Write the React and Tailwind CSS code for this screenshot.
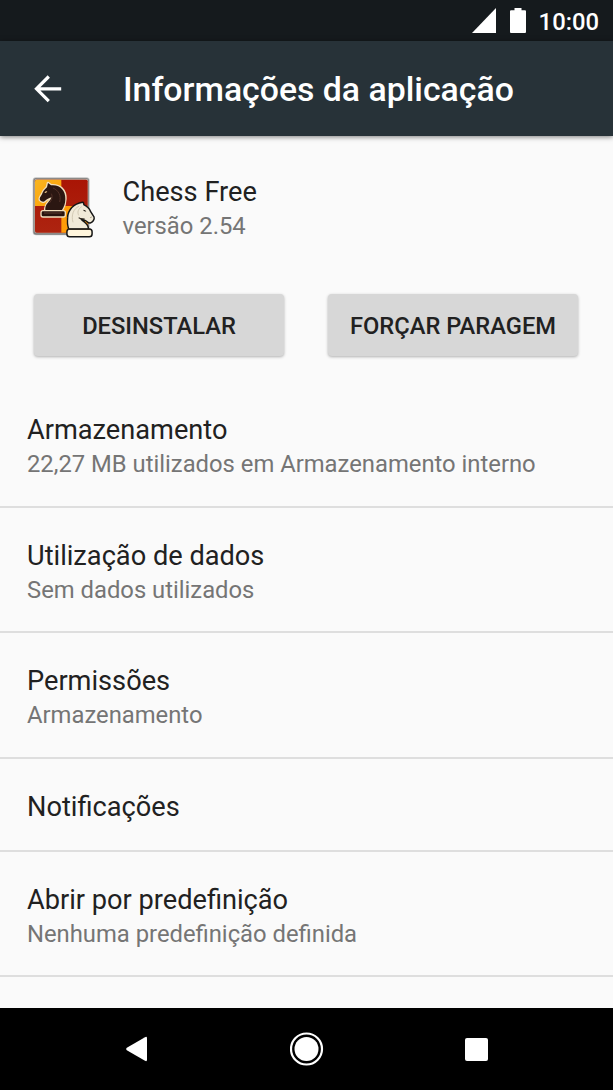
import clsx from "clsx";

const OPCOES = [
  { titulo: "Armazenamento", resumo: "22,27 MB utilizados em Armazenamento interno" },
  { titulo: "Utilização de dados", resumo: "Sem dados utilizados" },
  { titulo: "Permissões", resumo: "Armazenamento" },
  { titulo: "Notificações" },
  { titulo: "Abrir por predefinição", resumo: "Nenhuma predefinição definida" },
];

function StatusBar() {
  return (
    <div className="flex h-[41px] shrink-0 items-center justify-end bg-[#151a1d] pr-[14px] text-white">
      <svg width="24" height="25" viewBox="0 0 24 25" fill="currentColor">
        <path d="M24 0v25H0z" />
      </svg>
      <svg className="ml-[14px]" width="16" height="25" viewBox="0 0 16 25" fill="currentColor">
        <path d="M4.500 0h7v2.200h3.500q1 0 1 1V24q0 1-1 1H1q-1 0-1-1V3.200q0-1 1-1h3.500z" />
      </svg>
      <span className="ml-[13px] pt-[4px] text-[23.8px] leading-none font-medium">10:00</span>
    </div>
  );
}

function AppBar() {
  return (
    <header className="z-10 flex h-[95px] shrink-0 items-center bg-[#273238] pl-[34px] text-white shadow-[0_1px_5px_rgba(0,0,0,0.5)]">
      <button aria-label="Voltar">
        <svg width="28" height="28" viewBox="0 0 28 28" fill="none" stroke="currentColor" strokeWidth="3.2">
          <path d="M14.800 1.500 2.500 13.800 14.800 26.100M2.500 13.800H27.200" />
        </svg>
      </button>
      <h1 className="ml-[61px] pt-[3px] text-[33.8px] leading-none font-medium">Informações da aplicação</h1>
    </header>
  );
}

function ChessIcon() {
  return (
    <svg width="66" height="64" viewBox="36 33 198 192">
      <defs>
        <linearGradient id="red" x1="0" y1="0" x2="0" y2="1">
          <stop offset="0" stopColor="#a91505" />
          <stop offset="1" stopColor="#ad2410" />
        </linearGradient>
        <linearGradient id="gold" x1="0" y1="0" x2="1" y2="1">
          <stop offset="0" stopColor="#f8b522" />
          <stop offset="1" stopColor="#ff9d00" />
        </linearGradient>
      </defs>
      <rect x="38" y="37" width="171" height="174" rx="10" fill="#000" opacity="0.22" />
      <rect x="40" y="39" width="167" height="170" rx="9" fill="#000" opacity="0.35" />
      <rect x="43" y="41" width="162" height="164" rx="7" fill="#b9aaa0" />
      <rect x="45" y="44" width="158" height="159" rx="5" fill="url(#red)" />
      <path d="M50 44h74v79H45V49q0-5 5-5z" fill="url(#gold)" />
      <path d="M124 123h79v80h-79z" fill="#ff9c08" />

      <g stroke="#f1dfbd" strokeWidth="8" strokeLinejoin="round" paintOrder="stroke">
        <path
          fill="#2b1712"
          d="M84 54l9 7c27-3 44 15 43 41 0 14-4 23-10 33H76c-1-13 6-20 14-29l5-9c-7 2-13 4-18 9-4 6-12 5-17-1-3-5 2-10 6-17 3-9 7-14 15-21z"
        />
        <rect x="65" y="139" width="69" height="15" rx="4" fill="#29140f" />
      </g>
      <path d="M73 83l5-5 4 2-5 4z" fill="#e8c48a" />
      <path d="M99 69c17 7 25 23 20 42M94 86c5 10 1 20-6 28" fill="none" stroke="#59362c" strokeWidth="2.500" />
      <path d="M72 144h53" stroke="#76513f" strokeWidth="2" />

      <g stroke="#161616" strokeWidth="9" strokeLinejoin="round" paintOrder="stroke">
        <path
          fill="#f1ead8"
          d="M188 114l2 7c9 4 17 11 20 20l10 16c2 6-4 13-10 15-6 0-8-6-14-8-6-1-12-1-16-4 3 11 23 15 23 31h-55c-4-12-4-22-3-33 1-22 17-40 43-44z"
        />
        <rect x="143" y="194" width="71" height="19" rx="6" fill="#fff5dc" />
      </g>
      <path d="M177 124c-17 7-24 27-18 48M185 125c-12 8-13 17-9 26" fill="none" stroke="#d3cab4" strokeWidth="3" />
      <path d="M176 158c4 4 11 3 18 4" fill="none" stroke="#302920" strokeWidth="3.500" />
      <path d="M190 134q7 0 9 6l-8-2z" fill="#29231b" />
      <path d="M211 158l4-2" stroke="#5b5142" strokeWidth="2" />
      <path d="M144 193h67" stroke="#302920" strokeWidth="4" />
    </svg>
  );
}

function AcaoButton({ children }) {
  return (
    <button className="h-[62px] rounded-[4px] bg-[#d7d7d7] pt-[3px] text-[23.7px] font-medium text-[#212121] shadow-[0_1px_3px_rgba(0,0,0,0.3)]">
      {children}
    </button>
  );
}

function OpcaoItem({ titulo, resumo }) {
  return (
    <li
      className={clsx(
        "flex flex-col justify-center border-b-2 border-[#dedede] pt-[5px] pl-[27px]",
        resumo ? "h-[125.5px]" : "h-[93px]"
      )}
    >
      <span className="text-[27.2px] leading-[36px] text-[#212121]">{titulo}</span>
      {resumo && <span className="text-[23.8px] leading-[33px] text-[#757575]">{resumo}</span>}
    </li>
  );
}

function NavBar() {
  return (
    <nav className="flex h-[82px] shrink-0 items-center justify-between bg-black pr-[125px] pl-[125px] text-white">
      <svg width="23" height="26" viewBox="0 0 23 26" fill="currentColor">
        <path d="M20 1.200 1.800 11.800q-1.500 1.200 0 2.400L20 24.800q2 1 2-1V2.200q0-2-2-1z" />
      </svg>
      <svg width="34" height="34" viewBox="0 0 34 34">
        <circle cx="16.500" cy="17" r="15.500" fill="none" stroke="currentColor" strokeWidth="2.200" />
        <circle cx="16.500" cy="17" r="12" fill="currentColor" />
      </svg>
      <div className="h-[23px] w-[23px] rounded-[2px] bg-white" />
    </nav>
  );
}

export default function App() {
  return (
    <div className="flex h-[1090px] w-[613px] flex-col overflow-hidden bg-[#fafafa] font-[Roboto,sans-serif]">
      <StatusBar />
      <AppBar />
      <main className="min-h-0 flex-1 overflow-hidden">
        <section className="flex h-[107px] pt-[38px] pl-[32px]">
          <div className="pt-[2px]">
            <ChessIcon />
          </div>
          <div className="ml-[24.500px] flex flex-col">
            <span className="text-[27.2px] leading-[36px] text-[#212121]">Chess Free</span>
            <span className="text-[23.8px] leading-[33px] text-[#757575]">versão 2.54</span>
          </div>
        </section>
        <div className="mt-[51px] grid grid-cols-2 gap-[44px] pr-[35px] pl-[34px]">
          <AcaoButton>DESINSTALAR</AcaoButton>
          <AcaoButton>FORÇAR PARAGEM</AcaoButton>
        </div>
        <ul className="mt-[26.400px]">
          {OPCOES.map((o) => (
            <OpcaoItem key={o.titulo} {...o} />
          ))}
        </ul>
      </main>
      <NavBar />
    </div>
  );
}
